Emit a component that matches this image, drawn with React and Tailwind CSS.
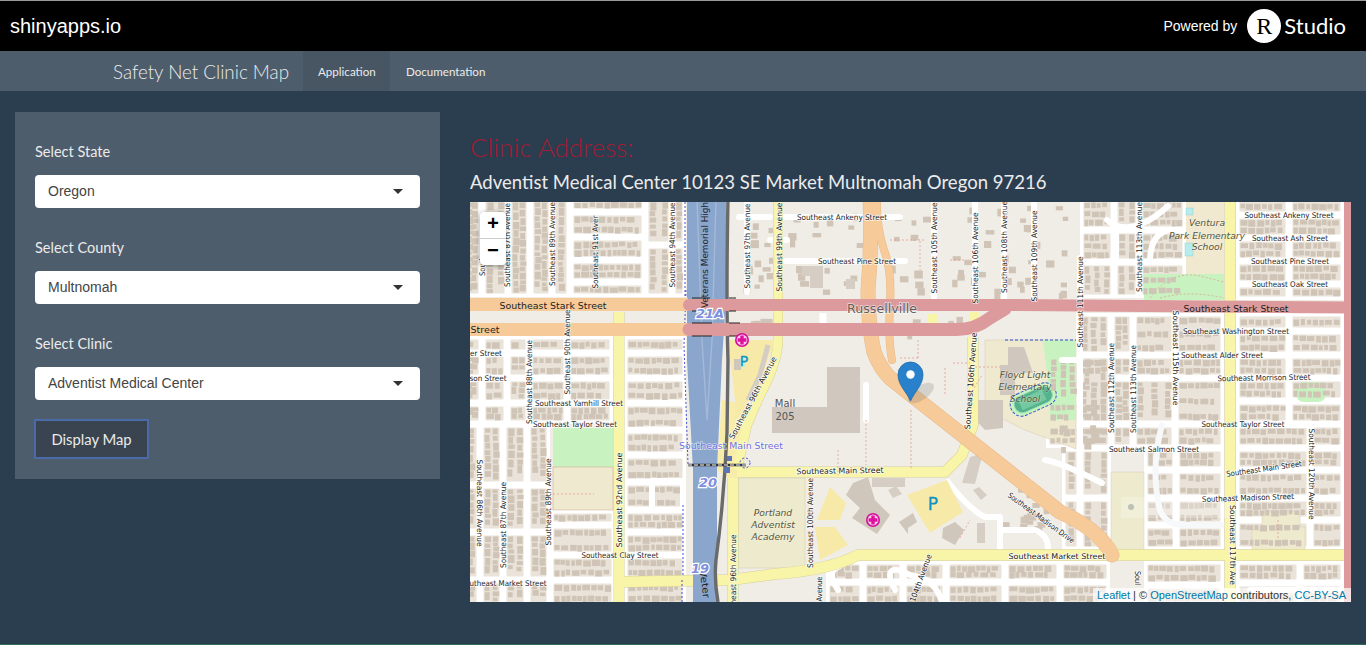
import React from "react";

let seed = 12345;
const rnd = (a, b) => {
  seed = (seed * 16807) % 2147483647;
  return a + ((seed % 10000) / 10000) * (b - a);
};

const cells = [];
const houses = [];
const pushHouse = (x, y, w, h) => houses.push([x, y, w, h]);

function fillCell(x, y, w, h) {
  cells.push([x, y, w, h]);
  if (w >= h) {
    const rows = h > 24 ? [y + 1, y + h / 2 - 3, y + h - 7] : h > 12 ? [y + 1, y + h - 7] : [y + h / 2 - 3];
    rows.forEach((ry) => {
      let cx = x + 1;
      while (cx < x + w - 4) {
        const hw = rnd(3.5, 8);
        const hh = rnd(4.5, 6.5);
        if (cx + hw < x + w) pushHouse(cx, ry + rnd(0, 1), hw, hh);
        cx += hw + rnd(0.5, 2.2);
      }
    });
  } else {
    const cols = w > 24 ? [x + 1, x + w / 2 - 3, x + w - 7] : w > 12 ? [x + 1, x + w - 7] : [x + w / 2 - 3];
    cols.forEach((rx) => {
      let cy = y + 1;
      while (cy < y + h - 4) {
        const hh = rnd(3.5, 8);
        const hw = rnd(4.5, 6.5);
        if (cy + hh < y + h) pushHouse(rx + rnd(0, 1), cy, hw, hh);
        cy += hh + rnd(0.5, 2.2);
      }
    });
  }
}

const regionRects = [];
function region(xs, ys, sw = 7) {
  regionRects.push([xs[0], ys[0], xs[xs.length - 1] - xs[0], ys[ys.length - 1] - ys[0]]);
  for (let i = 0; i < xs.length - 1; i++) {
    for (let j = 0; j < ys.length - 1; j++) {
      fillCell(
        xs[i] + sw / 2,
        ys[j] + sw / 2,
        xs[i + 1] - xs[i] - sw,
        ys[j + 1] - ys[j] - sw
      );
    }
  }
}
function scatter(x, y, w, h, n) {
  for (let i = 0; i < n; i++) {
    pushHouse(rnd(x, x + w), rnd(y, y + h), rnd(4, 9), rnd(4, 8));
  }
}

// West of the freeway, north of Stark
region([462, 482, 508, 530, 552, 570], [198, 297]);
region([570, 645], [198, 212, 237, 260, 282, 297]);
region([645, 672, 686], [198, 245, 297]);
// West, south of Stark
region([462, 482, 507, 529, 567, 613], [336, 353, 378, 403, 424]);
region([462, 480, 503, 527, 550], [424, 485, 532, 580, 606]);
region([550, 615], [510, 525, 555, 580, 606]);
region([624, 686], [336, 353, 378, 403, 430, 455]);
region([624, 686], [455, 482, 510, 532, 555, 580, 606]);
// East
region([1236, 1289, 1344], [198, 215, 238, 261, 284, 300]);
region([1236, 1289, 1344], [313, 331, 355, 378, 401, 424]);
region([1236, 1310, 1344], [424, 448, 470, 498, 520, 550]);
region([1076, 1111, 1133, 1175, 1224], [313, 355, 378, 424, 448]);
region([1144, 1176, 1224], [448, 470, 498, 525, 550]);
region([1062, 1080, 1111], [448, 498, 550]);
region([1046, 1080, 1111], [355, 400, 424, 448]);
region([1080, 1114, 1139, 1186], [198, 230, 262, 298]);
// South band
region([826, 863, 903, 946, 1005, 1060, 1110], [561, 582, 606]);
region([1144, 1224], [561, 585, 606]);
region([1236, 1300, 1344], [561, 583, 606]);
// Scattered buildings
scatter(740, 205, 30, 88, 16);
scatter(785, 205, 75, 40, 9);
scatter(785, 265, 75, 30, 7);
scatter(885, 206, 45, 88, 12);
scatter(945, 205, 125, 90, 36);
scatter(740, 315, 30, 18, 5);
scatter(895, 314, 70, 20, 7);
scatter(1000, 478, 50, 50, 16);
scatter(1055, 420, 40, 30, 8);

const labels = [
  ["Southeast Ankeny Street", 842, 217, 90],
  ["Southeast Pine Street", 857, 261, 78],
  ["Southeast Stark Street", 553, 305, 107, 0, 1],
  ["Street", 485, 329, 29, 0, 1],
  ["er Street", 486, 353, 32],
  ["son Street", 488, 378, 37],
  ["Southeast Yamhill Street", 579, 403, 88],
  ["Southeast Taylor Street", 575, 424, 84],
  ["Southeast Clay Street", 620, 555, 77],
  ["utheast Market Street", 508, 583, 77],
  ["Southeast Main Street", 840, 471, 87, -1],
  ["Southeast Market Street", 1057, 556, 97],
  ["Southeast Madison Drive", 1041, 518, 80, 36],
  ["Southeast Ankeny Street", 1289, 215, 89],
  ["Southeast Ash Street", 1290, 238, 76],
  ["Southeast Pine Street", 1290, 261, 78],
  ["Southeast Oak Street", 1290, 284, 76],
  ["Southeast Stark Street", 1236, 308, 105, 0, 1],
  ["Southeast Washington Street", 1236, 331, 106],
  ["Southeast Alder Street", 1222, 355, 82],
  ["Southeast Morrison Street", 1264, 378, 93, -1],
  ["Southeast Taylor Street", 1243, 424, 83],
  ["Southeast Salmon Street", 1154, 449, 90],
  ["Southeast Main Street", 1264, 469, 76, -8],
  ["Southeast Madison Street", 1248, 498, 92, -2],
  ["Southeast 87th Avenue", 507, 245, 84, -90],
  ["South", 482, 266, 20, -90],
  ["Southeast 88th Avenue", 529, 382, 84, -90],
  ["Southeast 89th Avenue", 552, 244, 84, -90],
  ["Southeast 91st Aver", 595, 252, 73, -90],
  ["Southeast 94th Avenue", 672, 245, 85, -90],
  ["Veterans Memorial High", 704, 255, 106, -90, 1],
  ["Southeast 97th Avenue", 747, 246, 85, -90],
  ["Southeast 99th Avenue", 779, 247, 89, -90],
  ["Southeast 105th Avenue", 934, 248, 91, -90],
  ["Southeast 106th Avenue", 975, 258, 91, -90],
  ["Southeast 108th Avenue", 1004, 247, 92, -90],
  ["Southeast 109th Avenue", 1034, 256, 91, -90],
  ["Southeast 106th Avenue", 971, 381, 97, -86],
  ["Southeast 111th Avenue", 1080, 302, 91, -90],
  ["Southeast 113th Avenue", 1139, 247, 90, -90],
  ["Southeast 112th Avenue", 1111, 388, 90, -90],
  ["Southeast 113th Avenue", 1133, 389, 88, -90],
  ["Southeast 115th Avenue", 1175, 358, 95, 90],
  ["Southeast 120th Avenue", 1311, 474, 91, 90],
  ["Southeast 117th Ave", 1232, 545, 80, 90],
  ["Soul", 1137, 578, 14, 90],
  ["Southeast 90th Avenue", 567, 352, 85, -90],
  ["Southeast 86th Avenue", 479, 503, 87, 90],
  ["Southeast 87th Avenue", 503, 525, 86, -90],
  ["Southeast 89th Avenue", 548, 502, 87, -90],
  ["Southeast 92nd Avenue", 619, 500, 95, -90],
  ["Southeast 96th Avenue", 753, 398, 92, -62],
  ["Southeast 96th Avenue", 733, 578, 87, -90],
  ["Southeast 100th Avenue", 810, 523, 90, -90],
  ["Avenue", 819, 589, 25, -90],
  ["104th Avenue", 921, 578, 50, -70],
  ["Veter", 705, 584, 28, 82, 1],
];

const schoolLabels = [
  ["Floyd Light", 1025, 374],
  ["Elementary", 1025, 386],
  ["School", 1025, 398],
  ["Ventura", 1207, 222],
  ["Park Elementary", 1207, 235],
  ["School", 1207, 246],
  ["Portland", 773, 512],
  ["Adventist", 773, 524],
  ["Academy", 773, 536],
];

function Medical({ x, y }) {
  return (
    <g>
      <circle cx={x} cy={y} r="7" fill="#d40f9b" />
      <circle cx={x} cy={y} r="5.4" fill="#f7cfe9" />
      <path d={`M${x - 1.7} ${y - 4.4}h3.4v2.7h2.7v3.4h-2.7v2.7h-3.4v-2.7h-2.7v-3.4h2.7z`} fill="#e0109f" />
    </g>
  );
}

function ShieldLabel({ x, y, t }) {
  return (
    <text
      x={x}
      y={y}
      textAnchor="middle"
      dominantBaseline="central"
      fontSize="13"
      fontStyle="italic"
      fontWeight="700"
      fill="#7f8fe0"
      stroke="#fff"
      strokeWidth="2.4"
      paintOrder="stroke"
    >
      {t}
    </text>
  );
}

function MapArt() {
  const dash = "2 2";
  return (
    <svg viewBox="470 202 881 400" width="881" height="400" className="block font-['DejaVu_Sans',sans-serif]">
      <rect x="470" y="202" width="881" height="400" fill="#f0ede6" />
      {regionRects.map((r, i) => (
        <rect key={i} x={r[0]} y={r[1]} width={r[2]} height={r[3]} fill="#ffffff" />
      ))}
      {cells.map((c, i) => (
        <rect key={i} x={c[0]} y={c[1]} width={c[2]} height={c[3]} rx="1" fill="#e9e3d9" />
      ))}

      {/* parks, schools */}
      <rect x="553" y="428" width="60" height="40" fill="#c8f2bf" />
      <rect x="553" y="467" width="60" height="43" fill="#efe9cf" stroke="#c9a78b" strokeWidth="0.5" />
      <path d="M553 494H594" stroke="#e39a8f" strokeWidth="0.7" strokeDasharray={dash} />
      <rect x="738" y="478" width="67" height="90" fill="#eeeacd" stroke="#cfc9b5" strokeWidth="0.5" />
      <rect x="1186" y="198" width="38" height="76" fill="#f0e9cf" />
      <path d="M1144 274H1224V300H1144z" fill="#c8f2bf" />
      <path d="M1150 298Q1170 270 1200 276L1224 282M1160 298Q1190 290 1224 298" stroke="#e39a8f" strokeWidth="0.7" fill="none" strokeDasharray={dash} />
      <rect x="1186" y="208" width="7" height="7" fill="#b7ecec" stroke="#8cc" strokeWidth="0.4" />
      <rect x="1185" y="243" width="8" height="13" fill="#b7ecec" stroke="#8cc" strokeWidth="0.4" />
      <rect x="1296" y="382" width="30" height="20" rx="8" fill="#c8f2bf" />
      <rect x="1111" y="472" width="33" height="78" fill="#eeeacd" stroke="#cfc9b5" strokeWidth="0.4" />
      <path d="M1252 550V530H1262V512H1300V527H1305V550z" fill="#eeeacd" stroke="#d8cfa9" strokeWidth="0.5" />
      <path d="M985 340H1076V449L1025 430L985 410z" fill="#efe9cf" stroke="#cfc0a5" strokeWidth="0.4" />
      <path d="M1043 340H1076V420H1050V397z" fill="#c8f2bf" />
      <path d="M1005 340H1076" stroke="#2b4fd0" strokeWidth="1" strokeDasharray="3 2" fill="none" />
      <g transform="rotate(-24 1033 399)">
        <rect x="1009" y="388" width="48" height="23" rx="11" fill="#c8f2bf" stroke="#2b4fd0" strokeWidth="0.9" strokeDasharray="3 1.5" />
        <rect x="1013" y="391" width="40" height="17" rx="8" fill="#55b28f" stroke="#9adfb4" strokeWidth="0.8" />
        <rect x="1019" y="394" width="26" height="11" fill="#74c9a0" />
      </g>

      {/* buildings */}
      {houses.map((h, i) => (
        <rect key={i} x={h[0].toFixed(1)} y={h[1].toFixed(1)} width={h[2].toFixed(1)} height={h[3].toFixed(1)} fill="#cfc4b6" />
      ))}
      <path d="M827 367H860V433H772V407H827z" fill="#d0c8be" />
      <path d="M802 266H823V288H810V276H802z" fill="#d6cec4" />
      <path d="M846 279H855V289H846z" fill="#d6cec4" />
      <path d="M853 483L868 477L875 500L890 515L877 534L852 518L860 508L846 495z" fill="#cfc7bc" />
      <path d="M872 478H905V487H872z" fill="#d6cec4" />
      <path d="M888 490L896 486L902 494L893 498z" fill="#d6cec4" />
      <path d="M899 522L913 513L917 522L908 528L908 534z" fill="#cfc7bc" />
      <path d="M943 528L955 522L964 530L955 545L942 538z" fill="#cfc7bc" />
      <path d="M1008 347H1024L1033 373H1015V395H1000V365H1008z" fill="#d0c8be" />
      <path d="M968 400H1003V428L985 430L968 412z" fill="#d0c8be" />
      <path d="M962 483L970 457L983 453L975 484z" fill="#d6cec4" />
      <path d="M973 490L979 487L987 495L981 500z" fill="#d6cec4" />
      <path d="M977 523H985V543H977z" fill="#d6cec4" />

      {/* white minor streets, free-form */}
      <g fill="none" stroke="#fff" strokeWidth="6" strokeLinecap="round" strokeLinejoin="round">
        <path d="M739 217H770M785 217H900M786 261H905" />
        <path d="M934 202V298M975 202V298M1004 202V298M1034 202V298M1080 258V448M747 202V292" />
        <path d="M770 240H787" />
        <path d="M866 385V420" />
        <path d="M1107 220Q1130 240 1168 206M1116 232V262H1180M1150 262Q1150 235 1168 230" />
        <path d="M1260 425H1310V520" />
        <path d="M1162 425Q1150 470 1160 510Q1165 525 1185 525H1224" stroke="#f6f8fa" />
        <path d="M948 482Q970 510 985 517H1000V560" />
        <path d="M1003 530H1035Q1048 535 1048 548" />
        <path d="M1045 460Q1060 462 1102 483" />
        <path d="M840 566Q825 570 838 590M895 590Q880 560 910 575Q935 578 942 602" />
        <path d="M1250 590H1344" />
        <path d="M652 481H683V510H652z" />
        <path d="M1062 360H1076" />
      </g>

      {/* yellow roads */}
      <g fill="none" stroke="#d7d09a" strokeLinejoin="round">
        <path d="M619 312V602" strokeWidth="11" />
        <path d="M1230 200V602" strokeWidth="11" />
        <path d="M778 198V340Q778 362 760 395L747 425L737 470" strokeWidth="10" />
        <path d="M737 472H945L962 455L973 425V337" strokeWidth="11" />
        <path d="M733 478V602" strokeWidth="11" />
        <path d="M615 582L730 580L775 574Q830 570 858 555H1345" strokeWidth="11.5" />
      </g>
      <path d="M722 400L717 470L728 478H738L740 440L750 405z" fill="#f8ecaa" />
      <path d="M728 340H775L757 390L735 420V400z" fill="#f7e9a8" />
      <path d="M768 345L760 375L748 400" stroke="#d4cdc2" strokeWidth="5" fill="none" />
      <g fill="none" stroke="#f8f4a8" strokeLinejoin="round">
        <path d="M619 312V602" strokeWidth="10" />
        <path d="M1230 200V602" strokeWidth="10" />
        <path d="M778 198V340Q778 362 760 395L747 425L737 470" strokeWidth="9" />
        <path d="M737 472H945L962 455L973 425V337" strokeWidth="10" />
        <path d="M733 478V602" strokeWidth="10" />
        <path d="M615 582L730 580L775 574Q830 570 858 555H1345" strokeWidth="10.5" />
      </g>
      <path d="M933 314V326M975 312V326" stroke="#f8f4a8" strokeWidth="10" />
      <path d="M823 313V323" stroke="#fff" strokeWidth="7" />

      {/* parking lots */}
      <path d="M907 495L947 480L963 512L930 533z" fill="#f7e9a8" />
      <path d="M817 520L830 487L846 503L840 520z" fill="#f7e9a8" />
      <path d="M815 527L835 527L848 545L820 560z" fill="#f7e9a8" />

      {/* freeway */}
      <path d="M687 198H726L726 300L722 360L717 470L717 602H693V470L687 360z" fill="#8aa6cd" />
      <path d="M707 420L702 340L697 198M707 420L712 340L716 198" stroke="#a3b9d8" strokeWidth="1.4" fill="none" />
      <path d="M728 198Q726 300 728 360L727 433Q724 500 716 560Q714 580 718 602" stroke="#6a6a6a" strokeWidth="3.4" fill="none" />
      <path d="M686 290L684 345L688 465" stroke="#2b3fd0" strokeWidth="0.9" strokeDasharray="2 2" fill="none" />
      <path d="M685 202V296" stroke="#2b3fd0" strokeWidth="0.9" strokeDasharray="2 2" />
      <path d="M682 580L682 602M683 505L683 575" stroke="#2b3fd0" strokeWidth="0.9" strokeDasharray="2 2" />
      <path d="M688 465H746" stroke="#333" strokeWidth="2.6" />
      <path d="M688 465H746" stroke="#fff" strokeWidth="1.2" strokeDasharray="4 2" />
      <circle cx="745" cy="463" r="5" fill="none" stroke="#2b3fd0" strokeWidth="0.9" strokeDasharray="2 2" />
      <rect x="727" y="456" width="5" height="5" fill="#5b74b8" />
      <rect x="724" y="467" width="6" height="6" fill="#5b74b8" />

      {/* trunk roads */}
      <g fill="none" strokeLinejoin="round" strokeLinecap="round">
        <path d="M870 198Q872 240 868 290Q868 325 874 352Q880 368 890 378L1060 512Q1100 530 1112 555" stroke="#e8b98a" strokeWidth="15" />
        <path d="M877 198Q876 225 884 250Q892 270 890 305Q888 340 892 360" stroke="#e8b98a" strokeWidth="8" />
        <path d="M870 198Q872 240 868 290Q868 325 874 352Q880 368 890 378L1060 512Q1100 530 1112 555" stroke="#f6cb99" strokeWidth="14" />
        <path d="M877 198Q876 225 884 250Q892 270 890 305Q888 340 892 360" stroke="#f6cb99" strokeWidth="7" />
        <path d="M470 304.5H688M470 329.5H688" stroke="#f6cb99" strokeWidth="13" strokeLinecap="butt" />
        <path d="M689 305H1015L1351 307.5" stroke="#dc9a9c" strokeWidth="12" />
        <path d="M689 329.5H955Q975 330 990 318L1005 309" stroke="#dc9a9c" strokeWidth="13" />
        <path d="M1347.5 198V602" stroke="#dc9a9c" strokeWidth="7" strokeLinecap="butt" />
      </g>
      <path d="M692 298H710M692 311H712M692 323H712M692 336H712M729 298H736M729 311H736M729 323H740M729 336H740" stroke="#222" strokeWidth="1.2" />

      {/* footpaths */}
      <path d="M890 240H925M920 241V270M950 260H965M900 358H918M918 340V358M953 363H970M945 368V395M866 420V465M911 410V470M838 450V475M975 367H1000M968 398L982 375" stroke="#e39a8f" strokeWidth="0.8" strokeDasharray="2 2" fill="none" />
      <path d="M960 538L970 520M1278 520V540" stroke="#e39a8f" strokeWidth="0.8" strokeDasharray="2 2" fill="none" />

      {/* fading label box */}
      <rect x="1121" y="497" width="110" height="21" fill="#ffffff" opacity="0.25" />
      <circle cx="1131" cy="507" r="3" fill="#b9c2b5" />

      {/* symbols */}
      <Medical x={742} y={340} />
      <Medical x={873} y={520} />
      <rect x="734" y="359" width="7" height="11" fill="#cfc7bc" />
      <rect x="740" y="358" width="5" height="9" fill="#b7ecec" opacity="0.7" />
      <text x="744" y="366" textAnchor="middle" fontSize="14" fill="#0e93c4" stroke="#0e93c4" strokeWidth="0.3">P</text>
      <text x="933" y="510" textAnchor="middle" fontSize="17" fill="#0e93c4" stroke="#0e93c4" strokeWidth="0.3">P</text>

      {/* labels */}
      {labels.map(([t, x, y, len, a = 0, big], i) => (
        <text
          key={i}
          transform={`translate(${x} ${y}) rotate(${a})`}
          textAnchor="middle"
          dominantBaseline="central"
          fontSize={big ? 9.4 : 7.8}
          textLength={len}
          lengthAdjust="spacingAndGlyphs"
          fill="#222"
          stroke="#fff"
          strokeOpacity={big ? 0 : 0.75}
          strokeWidth="1.6"
          paintOrder="stroke"
        >
          {t}
        </text>
      ))}
      <text x="882" y="308" textAnchor="middle" dominantBaseline="central" fontSize="12.5" fill="#5f5f5f" stroke="#fff" strokeOpacity="0.6" strokeWidth="1.5" paintOrder="stroke" textLength="70" lengthAdjust="spacingAndGlyphs">Russellville</text>
      <text x="731" y="445" textAnchor="middle" dominantBaseline="central" fontSize="9.4" fill="#7070e0" stroke="#fff" strokeOpacity="0.6" strokeWidth="1.4" paintOrder="stroke" textLength="104" lengthAdjust="spacingAndGlyphs">Southeast Main Street</text>
      <text x="785" y="403" textAnchor="middle" dominantBaseline="central" fontSize="10" fill="#555">Mall</text>
      <text x="785" y="416" textAnchor="middle" dominantBaseline="central" fontSize="10" fill="#555">205</text>
      {schoolLabels.map(([t, x, y], i) => (
        <text key={i} x={x} y={y} textAnchor="middle" dominantBaseline="central" fontSize="9.2" fontStyle="italic" fill="#55553a" stroke="#fff" strokeOpacity="0.35" strokeWidth="1" paintOrder="stroke">
          {t}
        </text>
      ))}
      <ShieldLabel x={710} y={313} t="21A" />
      <ShieldLabel x={708} y={482} t="20" />
      <ShieldLabel x={700} y={568} t="19" />

      {/* marker */}
      <ellipse cx="921" cy="393" rx="15" ry="7" fill="#555" opacity="0.18" transform="rotate(-35 921 393)" />
      <path d="M910.5 401C906 391 898 385 898 374.500A12.500 12.500 0 0 1 923 374.500C923 385 915 391 910.500 401z" fill="#2a81cb" stroke="#1d6ba8" strokeWidth="0.8" />
      <circle cx="910.500" cy="374.500" r="4.200" fill="#fff" />
    </svg>
  );
}

function Field({ label, value }) {
  return (
    <div className="mb-[29px]">
      <div className="mb-[13px] text-[14.500px] leading-[21px] text-[#ebebeb] font-['Lato',sans-serif]">{label}</div>
      <div className="flex h-[33px] items-center justify-between rounded bg-white pl-[13px] pr-[17px] font-['Liberation_Sans',sans-serif] text-[14px] text-[#444]">
        <span>{value}</span>
        <span className="h-0 w-0 border-x-[5.500px] border-t-[5px] border-x-transparent border-t-[#333]" />
      </div>
    </div>
  );
}

export default function App() {
  return (
    <div className="flex h-[645px] flex-col overflow-hidden bg-[#2b3e50] font-['Lato',sans-serif]">
      <header className="flex h-[51px] items-center justify-between border-t border-[#9a9a9a] bg-black pl-[10px] pr-[20px] font-['Liberation_Sans',sans-serif] text-white">
        <div className="text-[20px]">shinyapps.io</div>
        <div className="flex items-center">
          <span className="mr-[10px] text-[14px]">Powered by</span>
          <span className="flex h-[34px] w-[34px] items-center justify-center rounded-full bg-white font-['Liberation_Serif',serif] text-[24px] leading-none text-black">R</span>
          <span className="ml-[3px] font-['Lato',sans-serif] text-[22px] leading-none">Studio</span>
        </div>
      </header>
      <nav className="flex h-[40px] items-stretch bg-[#4e5d6c] pl-[113px] text-[#ebebeb]">
        <div className="mr-[14px] flex items-center pt-[2px] text-[18.800px] font-light">Safety Net Clinic Map</div>
        <div className="flex w-[87px] items-center bg-[#485563] pl-[15px] pt-[1px] text-[11.600px]">Application</div>
        <div className="flex items-center pl-[16px] pt-[1px] text-[11.600px]">Documentation</div>
      </nav>
      <main className="flex flex-1 items-start pl-[15px] pt-[21px]">
        <aside className="w-[425px] bg-[#4e5d6c] px-[20px] pb-[20px] pt-[29px]">
          <Field label="Select State" value="Oregon" />
          <Field label="Select County" value="Multnomah" />
          <div className="-mb-[10px]">
            <Field label="Select Clinic" value="Adventist Medical Center" />
          </div>
          <button className="-ml-[1px] flex h-[40px] w-[115px] items-center justify-center border-2 border-[#4a6aa8] bg-[#3a4450] text-[14.800px] text-[#ebebeb]">
            Display Map
          </button>
        </aside>
        <section className="ml-[30px] w-[881px]">
          <h3 className="pt-[17px] text-[26px] font-light leading-[36px] text-[#a01c34]">Clinic Address:</h3>
          <h4 className="mt-[1px] text-[18.550px] leading-[33px] text-[#ebebeb]">
            Adventist Medical Center 10123 SE Market Multnomah Oregon 97216
          </h4>
          <div className="relative mt-[3px] h-[400px] w-[881px] overflow-hidden">
            <MapArt />
            <div className="absolute left-[10px] top-[10px] w-[26px] rounded bg-white text-center font-['Liberation_Mono',monospace] text-[20px] font-bold leading-[26px] text-black shadow-[0_1px_5px_rgba(0,0,0,0.4)]">
              <div className="border-b border-[#ccc]">+</div>
              <div>−</div>
            </div>
            <div className="absolute bottom-0 right-0 bg-white/70 pl-[4px] pr-[5px] font-['Liberation_Sans',sans-serif] text-[11px] leading-[14px] text-[#333]">
              <span className="text-[#0078a8]">Leaflet</span> | © <span className="text-[#0078a8]">OpenStreetMap</span> contributors, <span className="text-[#0078a8]">CC-BY-SA</span>
            </div>
          </div>
        </section>
      </main>
      <div className="h-px bg-[#2f6a55]" />
    </div>
  );
}
